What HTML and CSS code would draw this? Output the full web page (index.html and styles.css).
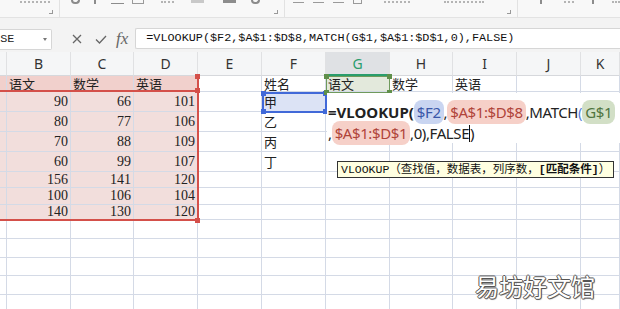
FILE: index.html
```html
<!DOCTYPE html>
<html lang="zh-CN">
<head>
    <meta charset="UTF-8">
    <meta name="viewport" content="width=device-width, initial-scale=1.0">
    <title>VLOOKUP + MATCH</title>
    <link rel="stylesheet" href="styles.css">
</head>
<body>
    <!-- обрезанная лента сверху: видны только низы значков -->
    <div class="ribbon">
        <div class="group g1">
            <span class="frag smudge w30 ml20"></span>
            <i class="launcher"></i>
        </div>
        <div class="group g2">
            <span class="frag bowl ml11"></span>
            <span class="frag stem ml14"></span>
            <span class="frag uline ml15"></span>
            <span class="frag box ml8"></span>
            <span class="frag smudge w13 ml17"></span>
            <span class="frag bar light ml17"></span>
            <span class="frag bar dark ml19"></span>
            <span class="frag bowl ml15"></span>
            <i class="launcher"></i>
        </div>
        <div class="group g3">
            <span class="frag lines ml8"></span>
            <span class="frag lines ml9"></span>
            <span class="frag lines ml9"></span>
            <span class="frag box small ml9"></span>
            <span class="frag smudge w26 ml22"></span>
            <span class="frag smudge w40 ml34"></span>
            <i class="launcher"></i>
        </div>
        <div class="group g4">
            <span class="frag stem ml22"></span>
            <span class="frag smudge w10 ml22"></span>
            <span class="frag stem ml18"></span>
            <span class="frag smudge w8 ml18"></span>
        </div>
    </div>

    <div class="formula-bar">
        <div class="name-box"><span class="name-text">FALSE</span><i class="drop"></i></div>
        <svg class="fb-icon cancel" width="10" height="10" viewBox="0 0 10 10">
            <path d="M1 1L9 9M9 1L1 9" stroke="#666" stroke-width="1.3" fill="none"/>
        </svg>
        <svg class="fb-icon ok" width="12" height="9" viewBox="0 0 12 9">
            <path d="M1 4.5L4.5 8L11 1" stroke="#666" stroke-width="1.3" fill="none"/>
        </svg>
        <span class="fx">fx</span>
        <div class="formula-input">=VLOOKUP($F2,$A$1:$D$8,MATCH(G$1,$A$1:$D$1,0),FALSE)</div>
    </div>

    <div class="sheet">
        <div class="row head">
            <div></div><div>B</div><div>C</div><div>D</div><div>E</div><div>F</div>
            <div class="active">G</div><div>H</div><div>I</div><div>J</div><div>K</div>
        </div>
        <div class="row r16">
            <div class="pkh"></div><div class="pkh txt">语文</div><div class="pkh txt">数学</div><div class="pkh txt">英语</div>
            <div></div><div class="txt">姓名</div><div class="txt sel-g">语文</div><div class="txt">数学</div><div class="txt">英语</div><div></div><div></div>
        </div>
        <div class="row r20">
            <div class="pk"></div><div class="pk num">90</div><div class="pk num">66</div><div class="pk num">101</div>
            <div></div><div class="txt sel-b">甲</div><div></div><div></div><div></div><div></div><div></div>
        </div>
        <div class="row r20">
            <div class="pk"></div><div class="pk num">80</div><div class="pk num">77</div><div class="pk num">106</div>
            <div></div><div class="txt">乙</div><div></div><div></div><div></div><div></div><div></div>
        </div>
        <div class="row r20">
            <div class="pk"></div><div class="pk num">70</div><div class="pk num">88</div><div class="pk num">109</div>
            <div></div><div class="txt">丙</div><div></div><div></div><div></div><div></div><div></div>
        </div>
        <div class="row r20">
            <div class="pk"></div><div class="pk num">60</div><div class="pk num">99</div><div class="pk num">107</div>
            <div></div><div class="txt">丁</div><div></div><div></div><div></div><div></div><div></div>
        </div>
        <div class="row r16">
            <div class="pk"></div><div class="pk num">156</div><div class="pk num">141</div><div class="pk num">120</div>
            <div></div><div></div><div></div><div></div><div></div><div></div><div></div>
        </div>
        <div class="row r17">
            <div class="pk"></div><div class="pk num">100</div><div class="pk num">106</div><div class="pk num">104</div>
            <div></div><div></div><div></div><div></div><div></div><div></div><div></div>
        </div>
        <div class="row r15">
            <div class="pk"></div><div class="pk num">140</div><div class="pk num">130</div><div class="pk num">120</div>
            <div></div><div></div><div></div><div></div><div></div><div></div><div></div>
        </div>
        <div class="row r19">
            <div></div><div></div><div></div><div></div><div></div><div></div><div></div><div></div><div></div><div></div><div></div>
        </div>
        <div class="row r19">
            <div></div><div></div><div></div><div></div><div></div><div></div><div></div><div></div><div></div><div></div><div></div>
        </div>
        <div class="row r18">
            <div></div><div></div><div></div><div></div><div></div><div></div><div></div><div></div><div></div><div></div><div></div>
        </div>
        <div class="row r19">
            <div></div><div></div><div></div><div></div><div></div><div></div><div></div><div></div><div></div><div></div><div></div>
        </div>
        <div class="row r19">
            <div></div><div></div><div></div><div></div><div></div><div></div><div></div><div></div><div></div><div></div><div></div>
        </div>

        <!-- рамки ссылок формулы -->
        <div class="range range-all"></div>
        <div class="range range-head"></div>
        <i class="handle red h-top"></i>
        <i class="handle red h-mid"></i>
        <i class="handle red h-bot"></i>

        <div class="range ref-f2">
            <i class="handle blue tl"></i><i class="handle blue tr"></i>
            <i class="handle blue bl"></i><i class="handle blue br"></i>
        </div>
        <div class="range ref-g1">
            <i class="handle green tl"></i><i class="handle green tr"></i>
            <i class="handle green bl"></i><i class="handle green br"></i>
        </div>

        <div class="editor">
            <div class="line"><b>=VLOOKUP(</b><span class="ref ref-blue">$F2</span>,<span class="ref ref-red">$A$1:$D$8</span>,MATCH<span class="paren">(</span><span class="ref ref-green">G$1</span></div>
            <div class="line">,<span class="ref ref-red">$A$1:$D$1</span>,0),FALSE<span class="caret"></span>)</div>
        </div>

        <div class="tip">VLOOKUP（查找值，数据表，列序数，<b>[匹配条件]</b>）</div>

        <div class="watermark">易坊好文馆</div>
    </div>
</body>
</html>
```

FILE: styles.css
```css
body {
    margin: 0;
    width: 620px;
    height: 309px;
    overflow: hidden;
    background-color: #fff;
    font-family: "Noto Sans", "Noto Sans CJK SC", sans-serif;
    color: #222;
}

/* лента */
.ribbon {
    height: 17px;
    display: flex;
    background-color: #f8f8f8;
    border-bottom: 1px solid #e3e3e3;
    overflow: hidden;
}

.group {
    position: relative;
    display: flex;
    align-items: flex-start;
    height: 17px;
    border-right: 1px solid #e2e2e2;
    box-sizing: border-box;
}

.g1 { width: 61px; }
.g2 { width: 227px; }
.g3 { width: 236px; }
.g4 { flex: 1; border-right: none; }

.launcher {
    position: absolute;
    right: 6px;
    top: 10px;
    width: 3px;
    height: 3px;
    border-right: 1px solid #999;
    border-bottom: 1px solid #999;
}

.frag {
    display: block;
    flex: none;
    box-sizing: border-box;
}

.smudge {
    height: 3px;
    border-bottom: 2px dotted #b4b4b4;
}

.bowl {
    width: 9px;
    height: 4px;
    border: 2px solid #8c8c8c;
    border-top: none;
    border-radius: 0 0 4px 4px;
}

.stem {
    width: 2px;
    height: 4px;
    background-color: #8c8c8c;
}

.uline {
    width: 13px;
    height: 4px;
    border-bottom: 1px solid #8c8c8c;
}

.box {
    width: 12px;
    height: 4px;
    border: 1px solid #9a9a9a;
    border-top: none;
}

.box.small { width: 9px; }

.bar {
    width: 13px;
    height: 3px;
}

.bar.light { background-color: #c9c9c9; }
.bar.dark { background-color: #8d8d8d; }

.lines {
    width: 11px;
    height: 3px;
    border-bottom: 1px solid #9a9a9a;
}

.w8 { width: 8px; }
.w10 { width: 10px; }
.w13 { width: 13px; }
.w26 { width: 26px; }
.w30 { width: 30px; }
.w40 { width: 40px; }

.ml8 { margin-left: 8px; }
.ml9 { margin-left: 9px; }
.ml11 { margin-left: 11px; }
.ml14 { margin-left: 14px; }
.ml15 { margin-left: 15px; }
.ml17 { margin-left: 17px; }
.ml18 { margin-left: 18px; }
.ml19 { margin-left: 19px; }
.ml20 { margin-left: 20px; }
.ml22 { margin-left: 22px; }
.ml34 { margin-left: 34px; }

/* строка формул */
.formula-bar {
    height: 34px;
    display: flex;
    align-items: flex-start;
    padding-top: 10px;
    box-sizing: border-box;
    background-color: #f3f3f3;
}

.name-box {
    position: relative;
    width: 52px;
    height: 21px;
    box-sizing: border-box;
    background-color: #fff;
    border: 1px solid #d6d6d6;
    border-left: none;
    border-radius: 0 2px 2px 0;
    overflow: hidden;
    margin-top: 1px;
}

.name-text {
    display: block;
    margin-left: -21px;
    font-family: "Liberation Mono", monospace;
    font-size: 11.8px;
    line-height: 19px;
    color: #222;
}

.drop {
    position: absolute;
    right: 4px;
    top: 8px;
    border-left: 2px solid transparent;
    border-right: 2px solid transparent;
    border-top: 3px solid #777;
}

.fb-icon { margin-top: 6px; }
.cancel { margin-left: 20px; }
.ok { margin-left: 13px; margin-top: 7px; }

.fx {
    margin-left: 9px;
    font-family: "Liberation Serif", serif;
    font-style: italic;
    font-size: 17px;
    line-height: 21px;
    color: #666;
}

.formula-input {
    flex: 1;
    height: 21px;
    margin-left: 7px;
    padding-left: 10px;
    box-sizing: border-box;
    background-color: #fff;
    border: 1px solid #d6d6d6;
    border-right: none;
    border-radius: 2px 0 0 2px;
    font-family: "Liberation Mono", monospace;
    font-size: 11.8px;
    line-height: 19px;
    color: #111;
    white-space: nowrap;
}

/* лист */
.sheet {
    position: relative;
}

.row {
    display: grid;
    grid-template-columns: 7px 64px 63px 64px 64px 64px 64px 63px 64px 64px 39px;
}

.row > div {
    display: flex;
    align-items: center;
    box-sizing: border-box;
    border-right: 1px solid #d4dae6;
    border-bottom: 1px solid #d4dae6;
    white-space: nowrap;
}

.r15 { height: 15px; }
.r16 { height: 16px; }
.r17 { height: 17px; }
.r18 { height: 18px; }
.r19 { height: 19px; }
.r20 { height: 20px; }

.head { height: 24px; }

.head > div {
    justify-content: center;
    background-color: #f5f6f7;
    border-right-color: #e0e1e3;
    border-bottom-color: #d6d8dc;
    font-size: 14px;
    color: #333;
}

.head > div.active {
    background-color: #dfe1e4;
    color: #2a9d6c;
    border-bottom: 2px solid #2a9d6c;
}

.txt {
    padding-left: 2px;
    font-family: "Noto Sans CJK SC", sans-serif;
    font-size: 13px;
    line-height: 14px;
    color: #222;
}

.num {
    justify-content: flex-end;
    padding-right: 2px;
    font-family: "Liberation Serif", serif;
    font-size: 14px;
    line-height: 14px;
    color: #222;
}

.row > .pk { background-color: #f2dedc; }
.row > .pkh { background-color: #f1d0cc; }
.row > .sel-g { background-color: #e3e9dc; }
.row > .sel-b { background-color: #dce3f5; }

/* рамки поверх ячеек */
.range {
    position: absolute;
    box-sizing: border-box;
}

.range-all {
    left: 0;
    top: 24px;
    width: 199px;
    height: 145px;
    border-right: 2px solid #d4504a;
    border-bottom: 2px solid #d4504a;
}

.range-head {
    left: 0;
    top: 24px;
    width: 199px;
    height: 16px;
    border-bottom: 2px solid #d4504a;
}

.handle {
    position: absolute;
    width: 5px;
    height: 5px;
}

.handle.red { background-color: #d4504a; left: 195px; }
.h-top { top: 22px; }
.h-mid { top: 36px; }
.h-bot { top: 166px; }

.handle.blue { background-color: #4169d8; }
.handle.green { background-color: #5f8f4a; }

.tl { left: -3px; top: -3px; }
.tr { right: -3px; top: -3px; }
.bl { left: -3px; bottom: -3px; }
.br { right: -3px; bottom: -3px; }

.ref-f2 {
    left: 262px;
    top: 40px;
    width: 65px;
    height: 21px;
    border: 2px solid #4169d8;
}

.ref-g1 {
    left: 326px;
    top: 24px;
    width: 64px;
    height: 17px;
    border: 1px solid #6f9a5c;
}

/* редактируемая ячейка */
.editor {
    position: absolute;
    left: 327px;
    top: 41px;
    width: 293px;
    height: 50px;
    padding: 9px 0 0 1px;
    box-sizing: border-box;
    background-color: #fff;
    font-size: 15px;
    letter-spacing: -0.4px;
    color: #222;
    white-space: nowrap;
}

.line {
    height: 21px;
    line-height: 21px;
}

.line b {
    font-weight: bold;
    letter-spacing: 0;
}

.ref {
    padding: 2px 3px;
    border-radius: 8px;
}

.ref-blue { background-color: #c9d5f1; color: #3a57a8; }
.ref-red { background-color: #f6d0c8; color: #b0443a; }
.ref-green { background-color: #d2dfc6; color: #4f7440; }

.paren { color: #5a7fd8; }

.caret {
    display: inline-block;
    width: 1px;
    height: 17px;
    vertical-align: -3px;
    background-color: #111;
}

/* подсказка */
.tip {
    position: absolute;
    left: 337px;
    top: 109px;
    height: 17px;
    padding: 0 3px;
    box-sizing: border-box;
    background-color: #ffffe1;
    border: 1px solid #333;
    font-family: "Liberation Mono", "Noto Sans CJK SC", monospace;
    font-size: 11.5px;
    line-height: 15px;
    color: #111;
    white-space: nowrap;
}

.watermark {
    position: absolute;
    left: 475px;
    top: 218px;
    font-family: "Noto Sans CJK SC", sans-serif;
    font-size: 24px;
    line-height: 32px;
    color: #fff;
    text-shadow: 1px 0 0 #555, -1px 0 0 #555, 0 1px 0 #555, 0 -1px 0 #555, 1px 1px 1px #777;
}
```
